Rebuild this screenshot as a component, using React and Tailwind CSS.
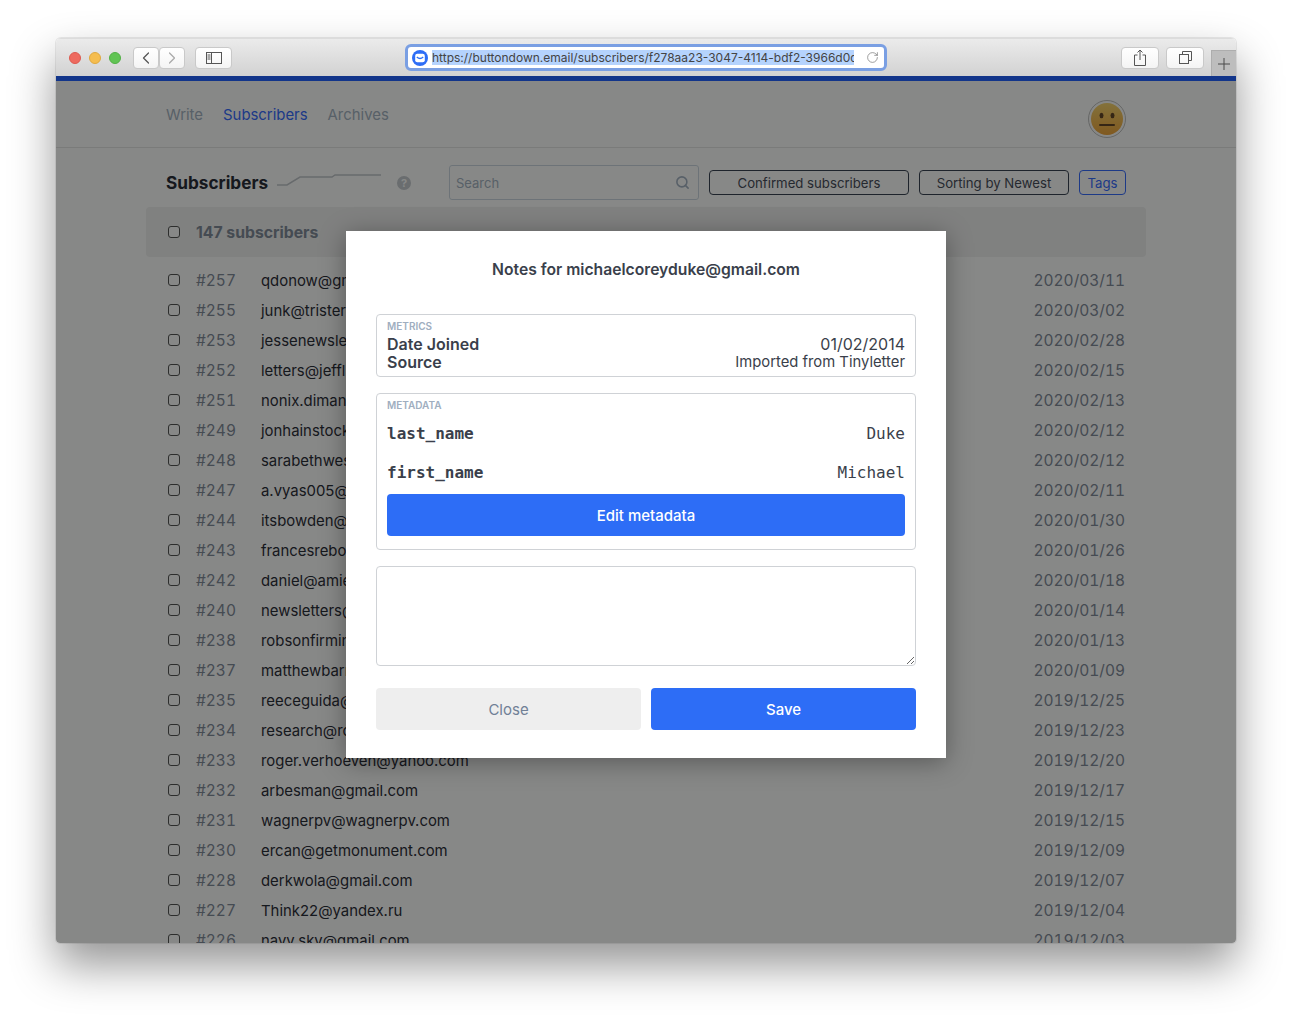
import React from "react";
import { ChevronLeft, ChevronRight, RotateCw, Search } from "lucide-react";

const rows = [
  ["#257", "qdonow@gmail.com", "2020/03/11"],
  ["#255", "junk@tristero.net", "2020/03/02"],
  ["#253", "jessenewsletter@gmail.com", "2020/02/28"],
  ["#252", "letters@jeffliu.com", "2020/02/15"],
  ["#251", "nonix.diman@gmail.com", "2020/02/13"],
  ["#249", "jonhainstock@gmail.com", "2020/02/12"],
  ["#248", "sarabethwest@gmail.com", "2020/02/12"],
  ["#247", "a.vyas005@gmail.com", "2020/02/11"],
  ["#244", "itsbowden@gmail.com", "2020/01/30"],
  ["#243", "francesrebo@gmail.com", "2020/01/26"],
  ["#242", "daniel@amie.so", "2020/01/18"],
  ["#240", "newsletters@gmail.com", "2020/01/14"],
  ["#238", "robsonfirmino@gmail.com", "2020/01/13"],
  ["#237", "matthewbarnes@gmail.com", "2020/01/09"],
  ["#235", "reeceguida@gmail.com", "2019/12/25"],
  ["#234", "research@rodeo.com", "2019/12/23"],
  ["#233", "roger.verhoeven@yahoo.com", "2019/12/20"],
  ["#232", "arbesman@gmail.com", "2019/12/17"],
  ["#231", "wagnerpv@wagnerpv.com", "2019/12/15"],
  ["#230", "ercan@getmonument.com", "2019/12/09"],
  ["#228", "derkwola@gmail.com", "2019/12/07"],
  ["#227", "Think22@yandex.ru", "2019/12/04"],
  ["#226", "navy.sky@gmail.com", "2019/12/03"],
];

const inter = { fontFamily: "Inter, sans-serif" };

const ToolButton = ({ className, children }) => (
  <div className={`h-[22px] shrink-0 flex items-center justify-center bg-gradient-to-b from-white to-[#f4f4f4] border border-[#c9c9c9] rounded-[4px] ${className}`}>
    {children}
  </div>
);

const Checkbox = () => (
  <span className="block w-3 h-3 rounded-[3px] border border-[#4a4a4a] bg-white shrink-0" />
);

const Toolbar = () => (
  <div className="relative h-[38px] bg-gradient-to-b from-[#ebebeb] to-[#d2d2d2] border-t border-[#dcdcdc] flex items-center pl-[13px]">
    <div className="flex items-center gap-2 shrink-0">
      <span className="w-3 h-3 rounded-full bg-[#ee6a5f] border border-[#dd5a50]" />
      <span className="w-3 h-3 rounded-full bg-[#f5bd4f] border border-[#e0a93f]" />
      <span className="w-3 h-3 rounded-full bg-[#61c454] border border-[#52b045]" />
    </div>
    <div className="flex ml-[12px] shrink-0">
      <ToolButton className="w-[26px]">
        <ChevronLeft size={20} strokeWidth={1.5} className="text-[#555]" />
      </ToolButton>
      <ToolButton className="w-[26px]">
        <ChevronRight size={20} strokeWidth={1.5} className="text-[#aaa]" />
      </ToolButton>
    </div>
    <ToolButton className="w-[37px] ml-[10px]">
      <svg width="16" height="12" viewBox="0 0 16 12" fill="none" stroke="#555" strokeWidth="1">
        <rect x="0.5" y="0.5" width="15" height="11" />
        <path d="M5.500 0.5v11M1.500 3h3M1.500 5h3M1.500 7h3" />
      </svg>
    </ToolButton>
    <div className="ml-[173px] w-[482px] h-[27px] shrink-0 rounded-[6px] bg-white border-[3px] border-[#7a9fe3] flex items-center pl-[4px] pr-[5px]">
      <svg width="16" height="16" viewBox="0 0 15 15" className="shrink-0">
        <circle cx="7.500" cy="7.500" r="7.500" fill="#2d6df6" />
        <rect x="3" y="3.500" width="9" height="8" rx="2" fill="#fff" />
        <path d="M4.500 6.500q3 3 6 0" fill="none" stroke="#2d6df6" strokeWidth="1.2" />
      </svg>
      <div className="ml-[4px] w-[422px] shrink-0 overflow-hidden">
        <span className="block whitespace-nowrap w-[422px] overflow-hidden bg-[#b5d3fd] text-[12px] leading-[15px] text-[#444]" style={inter}>
          https://buttondown.email/subscribers/f278aa23-3047-4114-bdf2-3966d0d0
        </span>
      </div>
      <RotateCw size={13} strokeWidth={1.3} className="text-[#777] ml-auto" />
    </div>
    <ToolButton className="w-[38px] ml-[234px]">
      <svg width="12" height="17" viewBox="0 0 12 17" fill="none" stroke="#555" strokeWidth="1">
        <path d="M3.500 6H.5v10.500h11V6h-3M6 11V1M3.500 3.500 6 1l2.500 2.500" />
      </svg>
    </ToolButton>
    <ToolButton className="w-[38px] ml-[7px]">
      <svg width="13" height="13" viewBox="0 0 13 13" fill="none" stroke="#555" strokeWidth="1">
        <rect x="0.5" y="3.500" width="9" height="9" />
        <path d="M3.500 3.500v-3h9v9h-3" />
      </svg>
    </ToolButton>
    <div className="absolute right-0 bottom-0 w-[25px] h-[26px] bg-[#bdbdbd] border-l border-t border-[#adadad] flex items-center justify-center">
      <svg width="12" height="12" viewBox="0 0 12 12" stroke="#4a4a4a" strokeWidth="1">
        <path d="M6 0v12M0 6h12" />
      </svg>
    </div>
  </div>
);

const Page = () => (
  <div className="h-[862px] overflow-hidden bg-white">
    <div className="h-[67px] border-b border-[#e4e4e4] flex items-start pl-[110px] pr-[110px]">
      <div className="flex gap-5 pt-[25px] text-[14.9px] leading-[19px] text-[#a0aec0]">
        <span>Write</span>
        <span className="text-[#2b62ff]">Subscribers</span>
        <span>Archives</span>
      </div>
      <div className="ml-auto mt-[19px] w-[38px] h-[38px] rounded-full border border-[#bbb] p-[2px] bg-white">
        <svg viewBox="0 0 32 32" className="w-full h-full">
          <defs>
            <linearGradient id="face" x1="0" y1="0" x2="0" y2="1">
              <stop offset="0" stopColor="#f7d266" />
              <stop offset="1" stopColor="#f0a030" />
            </linearGradient>
          </defs>
          <circle cx="16" cy="16" r="16" fill="url(#face)" />
          <ellipse cx="10.500" cy="12.500" rx="2" ry="2.700" fill="#5a3a1a" />
          <ellipse cx="21.500" cy="12.500" rx="2" ry="2.700" fill="#5a3a1a" />
          <rect x="8" y="21" width="16" height="2" rx="1" fill="#5a3a1a" />
        </svg>
      </div>
    </div>
    <div className="w-[1000px] ml-[90px]">
      <div className="h-[59px] pl-5 flex items-start">
        <h1 className="mt-[24px] w-[102px] whitespace-nowrap text-[17.2px] leading-[22px] font-bold text-[#1a202c]">Subscribers</h1>
        <svg width="106" height="16" viewBox="0 0 106 16" fill="none" stroke="#bfc3c9" strokeWidth="1.5" className="mt-[24px] ml-[9px]">
          <path d="M0 13h10l13-8h32l3-2h46" />
        </svg>
        <div className="mt-[28px] ml-[14px] w-[14px] h-[14px] rounded-full bg-[#c4c8ce] text-white text-[11px] leading-[14px] font-bold text-center">?</div>
        <div className="relative mt-[17px] ml-[38px] w-[250px] h-[35px] border border-[#cbd5e0] rounded-[3px] flex items-center pl-[6px] pt-[2px] text-[13px] text-[#a0aec0]">
          Search
          <Search size={15} strokeWidth={2.5} className="absolute right-[8px] top-[9px] text-[#a0aec0]" />
        </div>
        <div className="mt-[22px] ml-[10px] w-[200px] h-[25px] border border-[#2d3748] rounded-[4px] text-center text-[13.2px] leading-[24px] text-[#3a4150]">Confirmed subscribers</div>
        <div className="mt-[22px] ml-[10px] w-[150px] h-[25px] border border-[#2d3748] rounded-[4px] text-center text-[13.2px] leading-[24px] text-[#3a4150]">Sorting by Newest</div>
        <div className="mt-[22px] ml-[10px] w-[47px] h-[25px] border border-[#2b62ff] rounded-[4px] text-center text-[13.2px] leading-[24px] text-[#2b62ff]">Tags</div>
      </div>
      <div className="h-[50px] bg-[#f0f0f0] rounded-[4px] flex items-center pl-[22px] text-[15.75px] font-bold text-[#7a8495]">
        <Checkbox />
        <span className="ml-[16px] pt-[2px]">147 subscribers</span>
      </div>
      <div className="pt-[8px]">
        {rows.map(([id, email, date]) => (
          <div key={id} className="h-[30px] flex items-center pl-[22px] pr-[21px] text-[15.5px]">
            <Checkbox />
            <span className="ml-[16px] w-[65px] pt-[2px] text-[#7a8495] tabular-nums">{id}</span>
            <span className="pt-[2px] text-[14.9px] text-[#1a202c]">{email}</span>
            <span className="ml-auto pt-[2px] text-[#7a8495] tabular-nums">{date}</span>
          </div>
        ))}
      </div>
    </div>
  </div>
);

const Modal = () => (
  <div className="absolute left-[290px] top-[150px] w-[600px] h-[527px] bg-white px-[30px] shadow-[0_4px_24px_rgba(0,0,0,0.35)]">
    <h2 className="mt-[29px] text-[15.7px] leading-[20px] font-semibold text-center text-[#3a3f4b]">Notes for michaelcoreyduke@gmail.com</h2>
    <div className="mt-[34px] h-[63px] border border-[#cfd2d6] rounded-[4px] px-[10px] pt-[6px]">
      <div className="mb-[3px] text-[10px] leading-[11px] font-semibold text-[#a0aec0]">METRICS</div>
      <div className="flex justify-between text-[16px] leading-[18px] text-[#3a3f4b]">
        <span className="font-semibold">Date Joined</span>
        <span>01/02/2014</span>
      </div>
      <div className="flex justify-between text-[16px] leading-[18px] text-[#3a3f4b]">
        <span className="font-semibold">Source</span>
        <span className="text-[14.8px]">Imported from Tinyletter</span>
      </div>
    </div>
    <div className="mt-4 h-[157px] border border-[#cfd2d6] rounded-[4px] px-[10px] pt-[6px]">
      <div className="text-[10px] leading-[11px] font-semibold text-[#a0aec0]">METADATA</div>
      <div className="mt-[11px] h-[39px] flex justify-between text-[16px] leading-[24px] text-[#3a3f4b]" style={{ fontFamily: '"DejaVu Sans Mono", monospace' }}>
        <span className="font-bold">last_name</span>
        <span>Duke</span>
      </div>
      <div className="h-[39px] flex justify-between text-[16px] leading-[24px] text-[#3a3f4b]" style={{ fontFamily: '"DejaVu Sans Mono", monospace' }}>
        <span className="font-bold">first_name</span>
        <span>Michael</span>
      </div>
      <button className="block -mt-[6px] w-full h-[42px] pt-[2px] rounded-[4px] bg-[#2d6df6] text-white text-[15px] font-medium">Edit metadata</button>
    </div>
    <textarea className="block mt-4 w-full h-[100px] border border-[#cfd2d6] rounded-[4px] outline-none" />
    <div className="mt-[22px] flex gap-[10px]">
      <button className="flex-1 h-[42px] pt-[2px] rounded-[4px] bg-[#eeeeee] text-[#718096] text-[15px]">Close</button>
      <button className="flex-1 h-[42px] pt-[2px] rounded-[4px] bg-[#2d6df6] text-white text-[15px] font-medium">Save</button>
    </div>
  </div>
);

export default function App() {
  return (
    <div className="w-[1292px] h-[1017px] bg-white pt-[38px] pl-[56px] overflow-hidden" style={inter}>
      <div className="w-[1180px] h-[905px] rounded-t-[5px] rounded-b-[4px] overflow-hidden flex flex-col shadow-[0_0_0_1px_rgba(0,0,0,0.08),0_22px_45px_rgba(0,0,0,0.42)]">
        <Toolbar />
        <div className="h-[5px] bg-[#12358a]" />
        <div className="relative flex-1 overflow-hidden">
          <Page />
          <div className="absolute inset-0 bg-[rgba(15,17,15,0.5)]" />
          <Modal />
        </div>
      </div>
    </div>
  );
}
